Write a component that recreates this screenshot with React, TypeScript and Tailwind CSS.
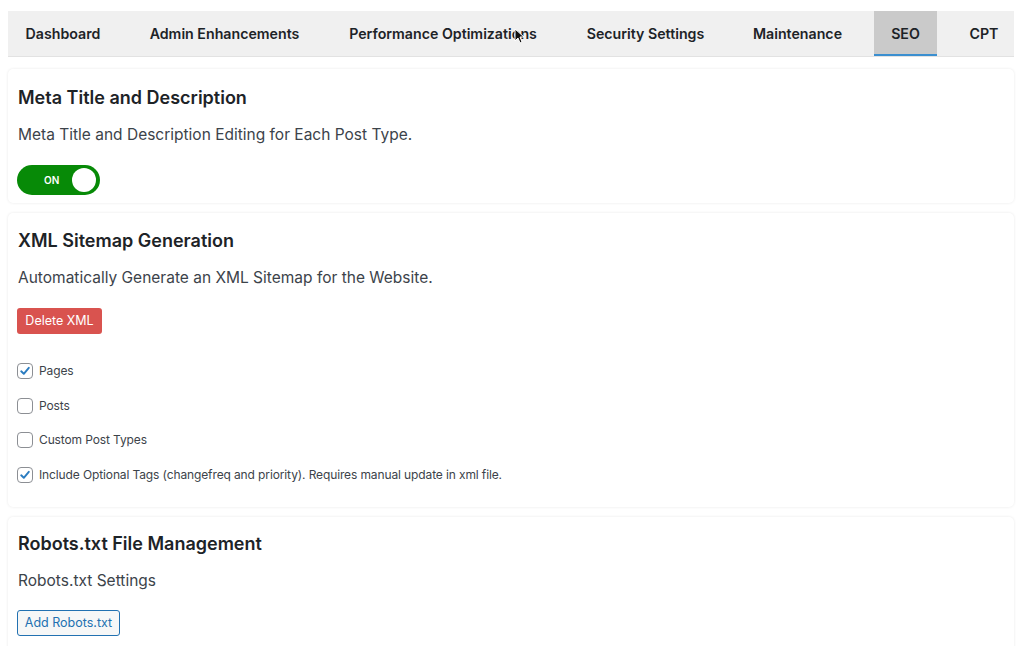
import React from "react";

const tabs = [
  { label: "Dashboard", w: 108, cls: "" },
  { label: "Admin Enhancements", w: 183, cls: "" },
  { label: "Performance Optimizations", w: 222, cls: "" },
  { label: "Security Settings", w: 151, cls: "" },
  { label: "Maintenance", w: 121, cls: "" },
  { label: "SEO", w: 63, active: true, cls: "" },
  { label: "CPT", w: 74, cls: "ml-[-6px]" },
];

function Check({ checked, label }: { checked?: boolean; label: string }) {
  return (
    <label className="flex h-[20px] items-center">
      <span className="flex h-[16px] w-[16px] items-center justify-center rounded-[4px] border border-[#8c8f94] bg-white">
        {checked && (
          <svg width="12" height="12" viewBox="0 0 12 12">
            <path d="M2.2 6.3 L4.8 8.8 L9.8 2.8" fill="none" stroke="#2a7cc0" strokeWidth="1.9" strokeLinecap="round" strokeLinejoin="round" />
          </svg>
        )}
      </span>
      <span className="ml-[6px] text-[12px] tracking-[-0.12px] text-[#3c434a]">{label}</span>
    </label>
  );
}

export default function App() {
  return (
    <div
      className="relative min-h-[646px] bg-white pl-[8px] pr-[10px] pt-[11px]"
      style={{ fontFamily: "Inter, 'Noto Sans', sans-serif" }}
    >
      <div className="flex h-[46px] items-stretch gap-[16px] border-b border-[#e2e2e2] bg-[#f0f0f0] pl-[1px]">
        {tabs.map((t) => (
          <div
            key={t.label}
            style={{ width: t.w }}
            className={
              (t.active
                ? "flex shrink-0 items-center justify-center border-b-2 border-[#3b8fd0] bg-[#cacaca] pt-[2px] text-[14.2px] font-semibold text-[#1d2327] "
                : "flex shrink-0 items-center justify-center text-[14.2px] font-semibold text-[#1d2327] ") + t.cls
            }
          >
            {t.label}
          </div>
        ))}
      </div>

      <div className="mt-[12px] flex flex-col gap-[10px]">
        <div className="rounded-[5px] bg-white pb-[8px] pl-[10px] pt-[17px] shadow-[0_0_3px_rgba(0,0,0,0.09)]">
          <h2 className="text-[18px] font-semibold leading-6 text-[#1d2327]">Meta Title and Description</h2>
          <p className="mt-[13px] text-[15.5px] leading-6 text-[#3c434a]">Meta Title and Description Editing for Each Post Type.</p>
          <div className="relative mt-[18px] ml-[-1px] flex h-[30px] w-[83px] items-center rounded-full bg-[#078a07]">
            <span className="ml-[27px] text-[10px] font-semibold text-white">ON</span>
            <span className="absolute right-[4px] top-[3px] h-[24px] w-[24px] rounded-full bg-white" />
          </div>
        </div>

        <div className="rounded-[5px] bg-white pb-[22px] pl-[10px] pt-[16px] shadow-[0_0_3px_rgba(0,0,0,0.09)]">
          <h2 className="text-[18px] font-semibold leading-6 text-[#1d2327]">XML Sitemap Generation</h2>
          <p className="mt-[13px] text-[15.5px] leading-6 text-[#3c434a]">Automatically Generate an XML Sitemap for the Website.</p>
          <button className="mt-[18px] ml-[-1px] flex h-[26px] w-[85px] items-center justify-center rounded-[3px] bg-[#d9534f] text-[12.5px] text-white">
            Delete XML
          </button>
          <div className="mt-[27px] ml-[-1px] flex flex-col gap-[14.7px]">
            <Check checked label="Pages" />
            <Check label="Posts" />
            <Check label="Custom Post Types" />
            <Check checked label="Include Optional Tags (changefreq and priority). Requires manual update in xml file." />
          </div>
        </div>

        <div className="rounded-[5px] bg-white pb-[20px] pl-[10px] pt-[15px] shadow-[0_0_3px_rgba(0,0,0,0.09)]">
          <h2 className="text-[18px] font-semibold leading-6 text-[#1d2327]">Robots.txt File Management</h2>
          <p className="mt-[13px] text-[15.5px] leading-6 text-[#3c434a]">Robots.txt Settings</p>
          <button className="mt-[17px] ml-[-1px] flex h-[26px] w-[103px] items-center justify-center rounded-[3px] border border-[#2271b1] bg-[#f6f7f7] text-[12.5px] text-[#2271b1]">
            Add Robots.txt
          </button>
        </div>
      </div>

      <svg className="absolute left-[514px] top-[28px]" width="10" height="16" viewBox="0 0 10 16">
        <path d="M1 1 L1 13 L4 10 L6 15 L8 14 L6 9 L10 9 Z" fill="#111" stroke="#fff" strokeWidth="1" />
      </svg>
    </div>
  );
}
